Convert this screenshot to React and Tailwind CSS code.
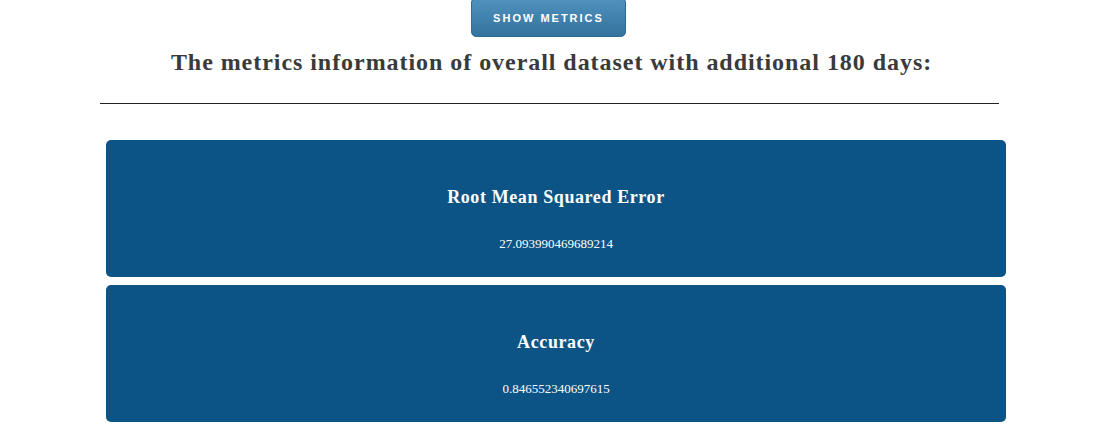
import React from "react";

const METRICS = [
  { name: "Root Mean Squared Error", value: "27.093990469689214" },
  { name: "Accuracy", value: "0.846552340697615" },
];

export default function App() {
  return (
    <div className="w-[1103px] min-h-[443px] bg-white font-['Liberation_Serif',serif]">
      <div className="flex justify-center">
        <button className="w-[155px] h-[38px] -translate-x-[3px] rounded-b-[5px] rounded-t-[3px] border border-[#2f6a92] bg-gradient-to-b from-[#4f90bd] to-[#33739d] text-white font-['Liberation_Sans',sans-serif] font-bold text-[11px] tracking-[2px] uppercase -mt-px">
          Show Metrics
        </button>
      </div>
      <h2 className="mt-[11px] text-center text-[24px] font-bold tracking-[0.95px] text-[#3a3a3a] leading-[28px]">
        The metrics information of overall dataset with additional 180 days:
      </h2>
      <hr className="mt-[27px] mx-auto w-[899px] border-t border-[#222] -translate-x-[2px]" />
      <div className="mt-[36px] ml-[106px] w-[900px] flex flex-col gap-[8px]">
        {METRICS.map((m) => (
          <div key={m.name} className="h-[137px] rounded-[5px] bg-[#0c5485] text-white flex flex-col items-center pt-[46px]">
            <div className="text-[18px] font-bold tracking-[0.6px] leading-[22px]">{m.name}</div>
            <div className="mt-[28px] text-[13px] leading-[16px]">{m.value}</div>
          </div>
        ))}
      </div>
    </div>
  );
}
